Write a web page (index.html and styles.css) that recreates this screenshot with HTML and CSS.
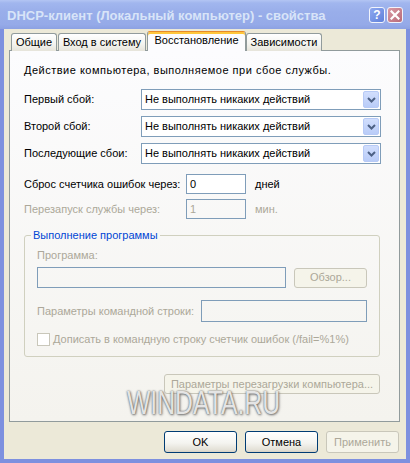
FILE: index.html
```html
<!DOCTYPE html>
<html lang="ru">
<head>
<meta charset="utf-8">
<title>DHCP-клиент (Локальный компьютер) - свойства</title>
<link rel="stylesheet" href="styles.css">
</head>
<body>
<div class="window">
  <div class="titlebar">
    <span class="title">DHCP-клиент (Локальный компьютер) - свойства</span>
    <div class="tb-buttons">
      <span class="tb-btn help">?</span>
      <span class="tb-btn close"><svg width="10" height="10" viewBox="0 0 10 10"><path d="M1.5 1.5 L8.5 8.5 M8.5 1.5 L1.5 8.5" stroke="#fff" stroke-width="2.2" stroke-linecap="square"/></svg></span>
    </div>
  </div>
  <div class="client">
    <div class="tabs">
      <div class="tab t1">Общие</div>
      <div class="tab t2">Вход в систему</div>
      <div class="tab t3 active">Восстановление</div>
      <div class="tab t4">Зависимости</div>
    </div>
    <div class="panel">
      <p class="intro">Действие компьютера, выполняемое при сбое службы.</p>
      <div class="actions">
        <span class="lbl">Первый сбой:</span>
        <div class="combo"><span class="combo-text">Не выполнять никаких действий</span><span class="combo-arrow"><svg width="9" height="6" viewBox="0 0 9 6"><path d="M1 1 L4.5 4.5 L8 1" fill="none" stroke="#4D6185" stroke-width="2"/></svg></span></div>
        <span class="lbl">Второй сбой:</span>
        <div class="combo"><span class="combo-text">Не выполнять никаких действий</span><span class="combo-arrow"><svg width="9" height="6" viewBox="0 0 9 6"><path d="M1 1 L4.5 4.5 L8 1" fill="none" stroke="#4D6185" stroke-width="2"/></svg></span></div>
        <span class="lbl">Последующие сбои:</span>
        <div class="combo"><span class="combo-text">Не выполнять никаких действий</span><span class="combo-arrow"><svg width="9" height="6" viewBox="0 0 9 6"><path d="M1 1 L4.5 4.5 L8 1" fill="none" stroke="#4D6185" stroke-width="2"/></svg></span></div>
      </div>
      <div class="counters">
        <div class="counter">
          <span class="lbl clbl">Сброс счетчика ошибок через:</span>
          <span class="edit small">0</span>
          <span class="unit">дней</span>
        </div>
        <div class="counter disabled">
          <span class="lbl clbl">Перезапуск службы через:</span>
          <span class="edit small off">1</span>
          <span class="unit">мин.</span>
        </div>
      </div>
      <fieldset class="group">
        <legend>Выполнение программы</legend>
        <div class="glbl">Программа:</div>
        <div class="prog-row">
          <span class="edit off wide"></span>
          <span class="btn disabled browse">Обзор...</span>
        </div>
        <div class="cmd-row">
          <span class="glbl cmd-lbl">Параметры командной строки:</span>
          <span class="edit off wide cmd"></span>
        </div>
        <div class="check-row">
          <span class="checkbox"></span>
          <span class="glbl">Дописать в командную строку счетчик ошибок (/fail=%1%)</span>
        </div>
      </fieldset>
      <div class="reboot-row">
        <span class="btn disabled reboot">Параметры перезагрузки компьютера...</span>
      </div>
      <div class="watermark">WINDATA.RU</div>
    </div>
    <div class="dialog-buttons">
      <span class="btn">OK</span>
      <span class="btn">Отмена</span>
      <span class="btn disabled">Применить</span>
    </div>
  </div>
</div>
</body>
</html>
```
FILE: styles.css
```css
* { box-sizing: border-box; }
html, body { margin: 0; padding: 0; }
body {
  font: 11px/13px "Liberation Sans", Arial, sans-serif;
  color: #000;
  background: #ECE9D8;
}
.window {
  width: 410px;
  height: 463px;
  display: flex;
  flex-direction: column;
  background: #ECE9D8;
}
.titlebar {
  height: 29px;
  flex: none;
  display: flex;
  align-items: center;
  padding: 1px 7px 0 7px;
  background: linear-gradient(#B3C5F3 0, #A1B6EE 3px, #99AEEA 40%, #95AAE8 85%, #8CA1E2 100%);
}
.title {
  font: bold 13px/15px "Liberation Sans", Arial, sans-serif;
  color: #D8E4F8;
  flex: 1;
  white-space: nowrap;
}
.tb-buttons { display: flex; gap: 2px; }
.tb-btn {
  width: 16px;
  height: 16px;
  border: 1px solid #F1F4FC;
  border-radius: 3px;
  display: flex;
  align-items: center;
  justify-content: center;
}
.help {
  background: linear-gradient(135deg, #8FA9F0, #5F80DA);
  color: #fff;
  font: bold 12px/12px "Liberation Sans", Arial, sans-serif;
}
.close {
  background: linear-gradient(135deg, #D99AA4, #B86A78);
}
.client {
  flex: 1;
  display: flex;
  flex-direction: column;
  border-left: 4px solid #7D90DF;
  border-right: 4px solid #7D90DF;
  border-bottom: 4px solid #7D90DF;
  padding: 2px 6px 0 5px;
}
.tabs {
  display: flex;
  align-items: flex-end;
  height: 20px;
  margin-bottom: -1px;
  padding-left: 2px;
  position: relative;
  z-index: 2;
}
.tab {
  height: 18px;
  border: 1px solid #919B9C;
  border-bottom: none;
  border-radius: 3px 3px 0 0;
  background: linear-gradient(#FFFFFF, #F3F3EF 60%, #E6E4DA);
  display: flex;
  align-items: center;
  justify-content: center;
  padding-bottom: 1px;
  white-space: nowrap;
}
.t1 { width: 46px; }
.t2 { width: 88px; margin-left: 1px; }
.t3 { width: 99px; margin-left: 1px; }
.t4 { width: 76px; }
.tab.active {
  height: 20px;
  background: #FCFCFE;
  border-top: 1px solid #E68B2C;
  box-shadow: inset 0 2px 0 #FFC73C;
  padding-bottom: 2px;
}
.panel {
  flex: none;
  height: 372px;
  border: 1px solid #919B9C;
  background: linear-gradient(#FCFCFE, #F4F3EE);
  padding: 13px 18px 0 14px;
  position: relative;
}
.intro { margin: 0 0 12px 0; letter-spacing: 0.5px; }
.actions {
  display: grid;
  grid-template-columns: 117px 1fr;
  row-gap: 6px;
  align-items: center;
}
.combo {
  height: 21px;
  border: 1px solid #7F9DB9;
  background: #fff;
  display: flex;
  align-items: center;
  padding: 0 1px 0 3px;
}
.combo-text { flex: 1; }
.combo-arrow {
  width: 16px;
  height: 17px;
  border: 1px solid #B7CAF6;
  border-radius: 2px;
  background: linear-gradient(#D1DEFD, #B9CCF8);
  display: flex;
  align-items: center;
  justify-content: center;
}
.counters {
  margin-top: 10px;
  display: flex;
  flex-direction: column;
  gap: 5px;
}
.counter { display: flex; align-items: center; }
.clbl { width: 162px; }
.edit {
  height: 20px;
  border: 1px solid #7F9DB9;
  background: #fff;
  display: flex;
  align-items: center;
  padding-left: 3px;
}
.edit.small { width: 60px; }
.edit.off { background: transparent; color: #ACA899; }
.unit { margin-left: 9px; }
.disabled .lbl, .disabled .unit { color: #ACA899; }
.group {
  margin: 10px 1px 0 0;
  border: 1px solid #D0D0BF;
  border-radius: 3px;
  padding: 7px 12px 10px 12px;
  min-width: 0;
}
.group legend {
  color: #0046D5;
  padding: 0 2px;
  margin-left: -6px;
}
.glbl { color: #ACA899; white-space: nowrap; }
.prog-row {
  margin-top: 5px;
  display: flex;
  align-items: center;
  gap: 8px;
}
.prog-row .edit { height: 21px; flex: 1; }
.cmd-row {
  margin-top: 12px;
  display: flex;
  align-items: center;
}
.cmd-lbl { width: 164px; }
.edit.cmd { flex: 1; height: 22px; }
.check-row {
  margin-top: 11px;
  display: flex;
  align-items: center;
  gap: 3px;
}
.checkbox {
  width: 13px;
  height: 13px;
  border: 1px solid #C9C7BA;
  background: #fff;
  flex: none;
}
.reboot-row {
  margin-top: 17px;
  display: flex;
  justify-content: flex-end;
  padding-right: 1px;
}
.btn {
  height: 22px;
  width: 73px;
  flex: none;
  border: 1px solid #003C74;
  border-radius: 3px;
  background: linear-gradient(#FFFFFF, #F4F4F0 55%, #E3E0D6 90%, #D6D0C5);
  display: flex;
  align-items: center;
  justify-content: center;
  white-space: nowrap;
}
.btn.disabled {
  border-color: #C9C7BA;
  background: #F5F4EA;
  color: #ACA899;
}
.btn.browse { width: 73px; height: 20px; }
.btn.reboot { width: 216px; height: 20px; }
.dialog-buttons {
  margin-top: 9px;
  display: flex;
  justify-content: flex-end;
  gap: 8px;
  padding-right: 1px;
}
.watermark {
  position: absolute;
  left: 117px;
  top: 335px;
  font: 33px/33px "Liberation Sans", Arial, sans-serif;
  color: #E4E4E4;
  text-shadow: 0 0 2px #555, 1px 1px 3px #777;
  transform: scaleX(0.75);
  transform-origin: left top;
  white-space: nowrap;
  pointer-events: none;
}
```
